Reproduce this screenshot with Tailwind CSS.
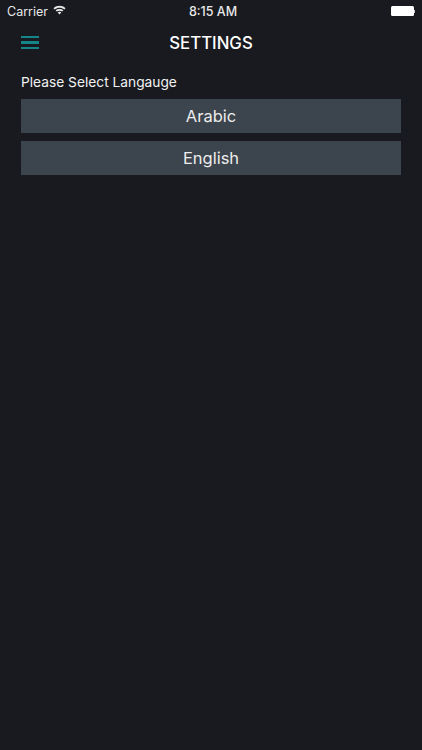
<!DOCTYPE html>
<html>
<head>
<meta charset="utf-8">
<script src="https://cdn.jsdelivr.net/npm/@tailwindcss/browser@4"></script>
</head>
<body class="m-0 bg-[#181a1f]">
<div class="w-[422px] h-[750px] bg-[#181a1f] text-white font-['Inter','Liberation_Sans',sans-serif] flex flex-col overflow-hidden">
  <div class="h-[22px] relative flex items-center pl-[7px] pr-[7px] text-[12.5px] text-[#e8e8e8]">
    <div class="flex items-center gap-[5px]">
      <span class="leading-[22px] pt-[1px]">Carrier</span>
      <svg width="13" height="10" viewBox="0 0 13 10" class="-mt-[3px]"><path d="M0.5 3.2C4 0 9 0 12.5 3.2L11.3 4.5C8.4 2 4.6 2 1.7 4.5Z M2.6 5.3C4.9 3.4 8.1 3.4 10.4 5.3L9.2 6.6C7.6 5.3 5.4 5.3 3.8 6.6Z M4.7 7.4C5.8 6.6 7.2 6.6 8.3 7.4L6.5 9.6Z" fill="#e8e8e8"/></svg>
    </div>
    <span class="absolute left-0 right-0 text-center font-medium leading-[22px] pl-[4px] pt-[1px]">8:15 AM</span>
    <div class="ml-auto flex items-center">
      <div class="w-[23px] h-[10px] bg-white rounded-[1.5px]"></div>
      <div class="w-[1.5px] h-[3px] bg-[#ccc]"></div>
    </div>
  </div>
  <div class="h-[42px] relative flex items-center pl-[21px]">
    <div class="flex flex-col gap-[3px] -mt-[1px]">
      <div class="w-[18px] h-[2.5px] bg-[#14868a]"></div>
      <div class="w-[18px] h-[2.5px] bg-[#14868a]"></div>
      <div class="w-[18px] h-[2.5px] bg-[#14868a]"></div>
    </div>
    <span class="absolute left-0 right-0 text-center text-[16.8px] font-medium pt-[2px]">SETTINGS</span>
  </div>
  <div class="px-[21px] pt-[10px] flex flex-col">
    <p class="text-[13.75px] leading-[17px] text-[#f2f2f2] mb-[8px]">Please Select Langauge</p>
    <div class="flex flex-col gap-[8px]">
      <div class="h-[34px] bg-[#3c444d] flex items-center justify-center text-[16.5px] text-[#ececec]">Arabic</div>
      <div class="h-[34px] bg-[#3c444d] flex items-center justify-center text-[16.5px] text-[#ececec]">English</div>
    </div>
  </div>
</div>
</body>
</html>
